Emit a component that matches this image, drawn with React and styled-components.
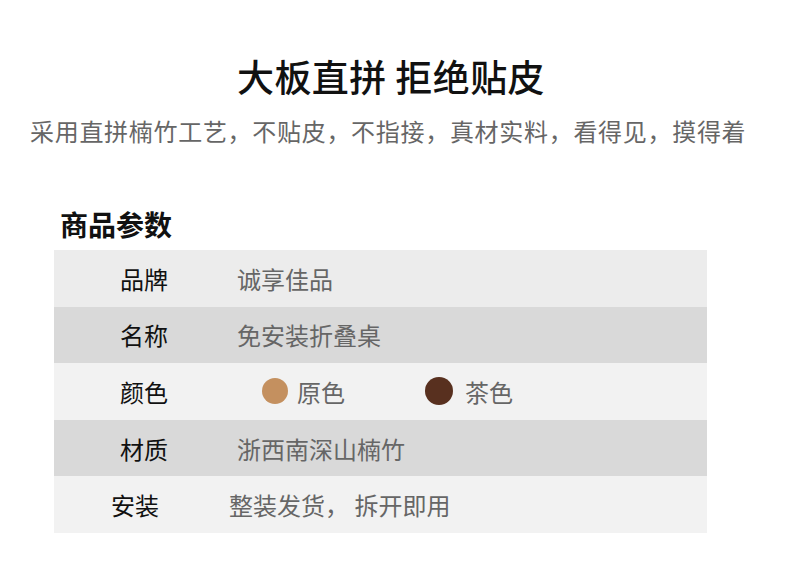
import React from "react"
import styled, { createGlobalStyle } from "styled-components"

const GlobalStyle = createGlobalStyle`
  body {
    margin: 0;
    background: #fff;
    font-family: "Noto Sans CJK SC", "Noto Sans", sans-serif;
  }
`

const Page = styled.div`
  width: 790px;
  height: 569px;
  padding-top: 54px;
  box-sizing: border-box;
  overflow: hidden;
`

const Title = styled.h1`
  margin: 0;
  padding-right: 8px;
  text-align: center;
  font-size: 37px;
  line-height: 44px;
  font-weight: 500;
  letter-spacing: 0.4px;
  color: #111;
`

const Subtitle = styled.p`
  margin: 18px 0 0 30px;
  font-size: 24px;
  line-height: 30px;
  letter-spacing: 0.7px;
  color: #666;
  white-space: nowrap;
`

const SectionHeading = styled.h2`
  margin: 61px 0 0 60px;
  font-size: 28px;
  line-height: 34px;
  font-weight: 700;
  color: #111;
`

const Table = styled.div`
  margin: 9px 0 0 54px;
  width: 653px;
`

const Row = styled.div`
  display: flex;
  align-items: center;
  height: 56.6px;
  background: ${(p) => p.$bg};
  padding-left: ${(p) => (p.$shift ? 57 : 66)}px;
`

const Label = styled.span`
  width: ${(p) => (p.$shift ? 118 : 117)}px;
  font-size: 24px;
  color: #111;
`

const Value = styled.span`
  display: flex;
  align-items: center;
  font-size: 24px;
  color: #666;
  padding-left: ${(p) => p.$pad || 0}px;
`

const Swatch = styled.span`
  width: ${(p) => p.$size}px;
  height: ${(p) => p.$size}px;
  border-radius: 50%;
  background: ${(p) => p.$color};
  margin-right: ${(p) => p.$gap}px;
`

const SwatchItem = styled.span`
  display: flex;
  align-items: center;
  margin-right: ${(p) => p.$gap || 0}px;
`

const rows = [
  { label: "品牌", value: "诚享佳品", bg: "#ececec" },
  { label: "名称", value: "免安装折叠桌", bg: "#d9d9d9" },
  { label: "颜色", colors: true, bg: "#f2f2f2" },
  { label: "材质", value: "浙西南深山楠竹", bg: "#d9d9d9" },
  { label: "安装", value: "整装发货， 拆开即用", bg: "#f2f2f2", shift: true },
]

export default function App() {
  return (
    <Page>
      <GlobalStyle />
      <Title>大板直拼 拒绝贴皮</Title>
      <Subtitle>采用直拼楠竹工艺，不贴皮，不指接，真材实料，看得见，摸得着</Subtitle>
      <SectionHeading>商品参数</SectionHeading>
      <Table>
        {rows.map((r) => (
          <Row key={r.label} $bg={r.bg} $shift={r.shift}>
            <Label $shift={r.shift}>{r.label}</Label>
            {r.colors ? (
              <Value $pad={25}>
                <SwatchItem $gap={80}>
                  <Swatch $color="#c4905f" $size={26} $gap={9} />
                  原色
                </SwatchItem>
                <SwatchItem>
                  <Swatch $color="#58301f" $size={28} $gap={12} />
                  茶色
                </SwatchItem>
              </Value>
            ) : (
              <Value>{r.value}</Value>
            )}
          </Row>
        ))}
      </Table>
    </Page>
  )
}
